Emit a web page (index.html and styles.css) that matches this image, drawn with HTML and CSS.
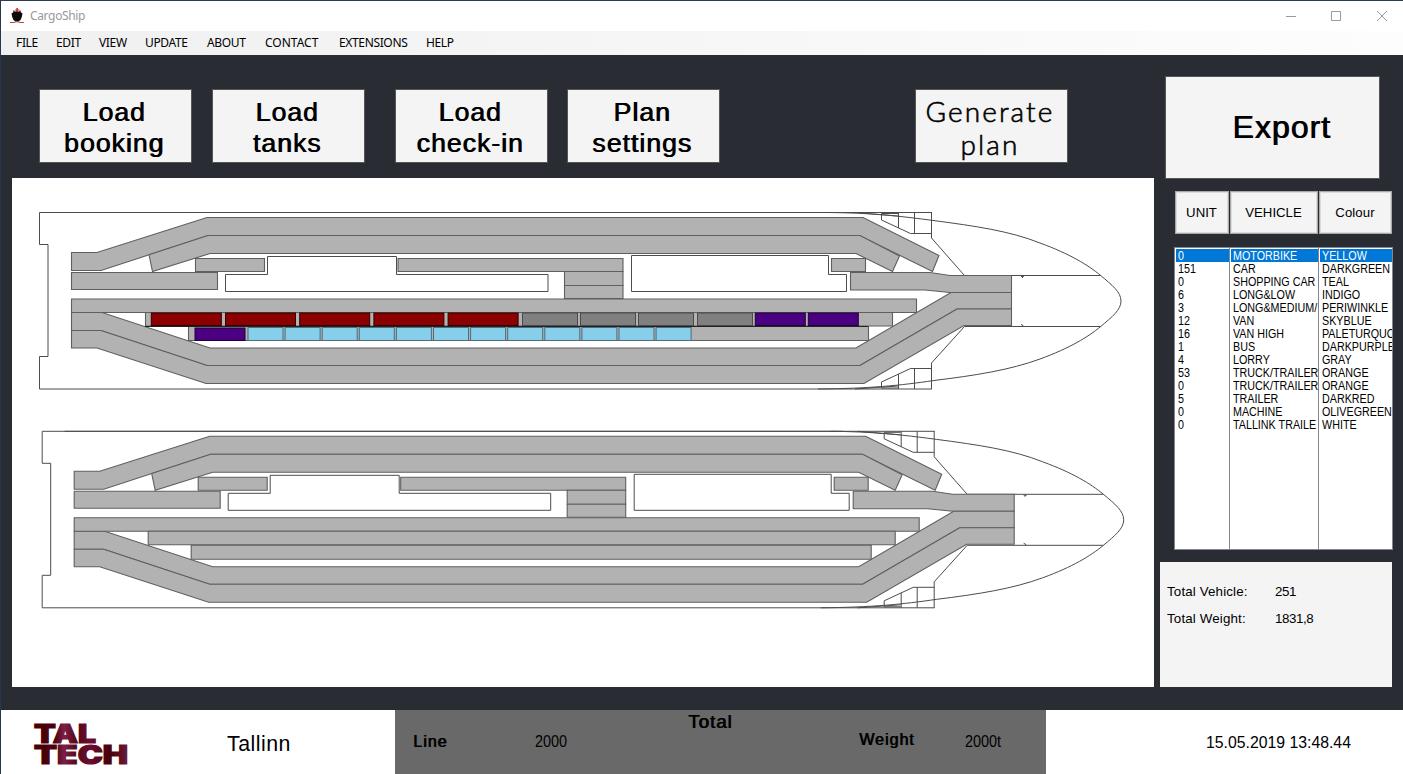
FILE: index.html
```html
<!DOCTYPE html>
<html lang="en">
<head>
<meta charset="utf-8">
<title>CargoShip</title>
<link rel="stylesheet" href="styles.css">
</head>
<body>
<div class="window">
  <header class="titlebar">
    <svg class="app-icon" width="16" height="16" viewBox="0 0 16 16">
      <path d="M4 4.500V2.500H6V1.500H7.300V0H9V1.500H10.300V2.500H12V4.500Z" fill="#c0423e"/>
      <path d="M6 3H7M9 3H10" stroke="#fff"/>
      <path d="M2.500 5.500L5 3.800H11L13.500 5.500L12.800 9L11.500 12L9.500 13.500H6.500L4.500 12L3.200 9Z" fill="#0b0b0b"/>
      <path d="M1 14.500H5L7 13.800H9L11 14.500H15" stroke="#b9403c" fill="none"/>
    </svg>
    <span class="app-name">CargoShip</span>
    <svg class="controls" width="104" height="14" viewBox="0 0 104 14">
      <g fill="none" stroke="#999">
        <path d="M1 7.500H11"/>
        <path d="M46.500 2.500H55.500V11.500H46.500Z"/>
        <path d="M92 2L102 12M102 2L92 12"/>
      </g>
    </svg>
  </header>
  <nav class="menu">
    <span class="m-file">FILE</span><span class="m-edit">EDIT</span><span class="m-view">VIEW</span><span class="m-update">UPDATE</span><span class="m-about">ABOUT</span><span class="m-contact">CONTACT</span><span class="m-ext">EXTENSIONS</span><span>HELP</span>
  </nav>
  <main class="body">
    <section class="left">
      <div class="actions">
        <button class="btn b1">Load<br>booking</button>
        <button class="btn b2">Load<br>tanks</button>
        <button class="btn b3">Load<br>check-in</button>
        <button class="btn b4">Plan<br>settings</button>
        <button class="btn generate">Generate<br>plan</button>
      </div>
      <div class="plan">
        <svg width="1142" height="509" viewBox="12 178 1142 509">
          <defs>
            <g id="deck">
              <g fill="none" stroke="#4c4c4c" stroke-width="1">
                <path d="M932 212.500H39.500V244.500H48V356.500H39.500V389H932"/>
                <path d="M62 212.500H840"/>
                <path d="M828 212.500C870 212.800 900 216 934 220.600C975 226 1010 231 1040 243C1070 254 1088 265 1100.700 275.500C1112 285 1121 292 1121 301C1121 310 1112 317 1100.700 326.500C1088 337 1070 348 1040 359C1010 370 975 375.500 934 380.500C900 385.500 870 388.500 818 389"/>
                <path d="M855 212.500L898 216M855 389L898 386M881.500 213.500H898M881.500 388H898"/>
                <path d="M881.500 213.500V220L910.500 233.500H931.500M931.500 212.500V238L964.500 275.500H1100.700"/>
                <path d="M881.500 388V382L910.500 368.500H931.500M931.500 389V363L964.500 326.500H1100.700"/>
                <path d="M898.500 212.500V228M914.500 212.500V233.500M898.500 374V389M914.500 368.500V389"/>
                <path d="M1021 276.500H1023.500L1022 278M1021 324.500L1023 325.500V327"/>
                <path d="M225.500 274.500H267.500V256.500H396.500V274.500H548V291.500H225.500Z"/>
                <path d="M631.500 255.500H828.500V274.500H846.500V291.500H631.500Z"/>
              </g>
              <g fill="#b2b2b2" stroke="#5f5f5f" stroke-width="1.100">
                <path d="M71.500 252.500H97L207 217.500H863L939 255.500L932.500 271.500L859.500 235.500H208L101 270.500H71.500Z"/>
                <path d="M149 254.700L208 235.500H860L899.500 256L892.500 271.500L856 253.500H210L152.500 271.500Z"/>
                <path d="M71.500 272.500H217.500V289.500H71.500Z"/>
                <path d="M195.500 258.500H264.500V271.500H195.500Z"/>
                <path d="M398 258.500H623V271.500H398Z"/>
                <path d="M564.500 271.500H623V285.500H564.500Z"/>
                <path d="M564.500 285.500H623V298.500H564.500Z"/>
                <path d="M831.500 258.500H865.500V271.500H831.500Z"/>
                <path d="M850.500 272.500H930L950 275.500H1011.500V292.500H950L925 290H850.500Z"/>
                <path d="M71.500 312.500H102L210 348H856L951 292.500H1011.500V309H957L860 365.500H207L101 330.500H71.500Z"/>
                <path d="M71.500 330.500H101L207 365.500H860L957 309H1011.500V325.500H964L864 383.500H206L97 348H71.500Z"/>
                <path d="M71.500 299H916.500V312.500H71.500Z"/>
                <path d="M145.500 312.500H892.500V326H145.500Z"/>
                <path d="M188.500 326.500H868.500V340.500H188.500Z"/>
              </g>
            </g>
            <rect id="red" y="313" width="70" height="12.500" fill="#8b0000" stroke="#300" stroke-width="1"/>
            <rect id="gray" y="313" width="55" height="12.500" fill="#808080" stroke="#4b4b4b" stroke-width="1"/>
            <rect id="indigo" width="50" height="12.500" fill="#4b0082" stroke="#200038" stroke-width="1"/>
            <rect id="sky" y="327.500" width="35" height="13" fill="#87ceeb" stroke="#4d6d7a" stroke-width="1"/>
          </defs>
          <use href="#deck"/>
          <use href="#red" x="151.300"/><use href="#red" x="225.500"/><use href="#red" x="299.700"/><use href="#red" x="373.900"/><use href="#red" x="448.100"/>
          <use href="#gray" x="522.500"/><use href="#gray" x="580.500"/><use href="#gray" x="638.500"/><use href="#gray" x="697.500"/>
          <use href="#indigo" x="755.300" y="313"/><use href="#indigo" x="808.300" y="313"/>
          <use href="#indigo" x="195" y="328"/>
          <use href="#sky" x="248"/><use href="#sky" x="285.100"/><use href="#sky" x="322.200"/><use href="#sky" x="359.300"/><use href="#sky" x="396.400"/><use href="#sky" x="433.500"/><use href="#sky" x="470.600"/><use href="#sky" x="507.700"/><use href="#sky" x="544.800"/><use href="#sky" x="581.900"/><use href="#sky" x="619"/><use href="#sky" x="656.100"/>
          <path d="M145 326.500H868" stroke="#222" fill="none"/>
          <use href="#deck" transform="translate(2.700 218.800)"/>
        </svg>
      </div>
    </section>
    <aside class="right">
      <button class="export">Export</button>
      <div class="heads"><span class="h1">UNIT</span><span class="h2">VEHICLE</span><span class="h3">Colour</span></div>
      <div class="lists">
        <ul class="c1"><li class="sel"><span>0</span></li><li><span>151</span></li><li><span>0</span></li><li><span>6</span></li><li><span>3</span></li><li><span>12</span></li><li><span>16</span></li><li><span>1</span></li><li><span>4</span></li><li><span>53</span></li><li><span>0</span></li><li><span>5</span></li><li><span>0</span></li><li><span>0</span></li></ul>
        <ul class="c2"><li class="sel"><span>MOTORBIKE</span></li><li><span>CAR</span></li><li><span>SHOPPING CAR</span></li><li><span>LONG&amp;LOW</span></li><li><span>LONG&amp;MEDIUM/</span></li><li><span>VAN</span></li><li><span>VAN HIGH</span></li><li><span>BUS</span></li><li><span>LORRY</span></li><li><span>TRUCK/TRAILER</span></li><li><span>TRUCK/TRAILER</span></li><li><span>TRAILER</span></li><li><span>MACHINE</span></li><li><span>TALLINK TRAILE</span></li></ul>
        <ul class="c3"><li class="sel"><span>YELLOW</span></li><li><span>DARKGREEN</span></li><li><span>TEAL</span></li><li><span>INDIGO</span></li><li><span>PERIWINKLE</span></li><li><span>SKYBLUE</span></li><li><span>PALETURQUO</span></li><li><span>DARKPURPLE</span></li><li><span>GRAY</span></li><li><span>ORANGE</span></li><li><span>ORANGE</span></li><li><span>DARKRED</span></li><li><span>OLIVEGREEN</span></li><li><span>WHITE</span></li></ul>
      </div>
      <dl class="totals">
        <dt>Total Vehicle:</dt><dd>251</dd>
        <dt>Total Weight:</dt><dd>1831,8</dd>
      </dl>
    </aside>
  </main>
  <footer class="footer">
    <svg class="logo" width="100" height="46" viewBox="0 0 100 46">
      <defs>
        <linearGradient id="wine" gradientUnits="userSpaceOnUse" x1="1" x2="95" y1="0" y2="0">
          <stop offset="0" stop-color="#480006"/><stop offset=".22" stop-color="#4c0010"/><stop offset=".32" stop-color="#7d1f48"/><stop offset=".45" stop-color="#560818"/><stop offset=".6" stop-color="#6b0c32"/><stop offset=".8" stop-color="#480006"/><stop offset="1" stop-color="#6e1a38"/>
        </linearGradient>
      </defs>
      <g class="logo-text" fill="url(#wine)" stroke="url(#wine)" stroke-width="1.200">
        <text x="1" y="20" textLength="62" lengthAdjust="spacingAndGlyphs">TAL</text>
        <text x="1" y="40.500" textLength="94" lengthAdjust="spacingAndGlyphs">TECH</text>
      </g>
    </svg>
    <span class="city">Tallinn</span>
    <div class="summary">
      <span class="bold line">Line</span>
      <span class="narrow v1">2000</span>
      <span class="bold total">Total</span>
      <span class="bold weight">Weight</span>
      <span class="narrow v2">2000t</span>
    </div>
    <time class="clock">15.05.2019 13:48.44</time>
  </footer>
</div>
</body>
</html>
```
FILE: styles.css
```css
* { box-sizing: border-box; }
body { margin: 0; font-family: "Liberation Sans", Arial, sans-serif; color: #000; }
.window {
  width: 1403px; height: 774px; overflow: hidden;
  display: flex; flex-direction: column;
  background: #2a2c34;
  border-top: 1px solid #2b3d55; border-left: 1px solid #26374f;
}
.titlebar { height: 30px; flex: none; display: flex; align-items: center; background: #fff; padding: 0 14px 0 8px; }
.app-name { margin-left: 5px; font: 12px/16px "Noto Sans", sans-serif; color: #999; letter-spacing: -.35px; }
.controls { margin-left: auto; }
.menu {
  height: 24px; flex: none; display: flex; padding-left: 15px;
  background: linear-gradient(90deg, #f0f0f0, #fdfdfd);
  font: 12px/23px "Noto Sans", sans-serif; letter-spacing: -.35px; white-space: nowrap;
}
.m-file { width: 40px; }
.m-edit { width: 43px; }
.m-view { width: 46px; }
.m-update { width: 62px; }
.m-about { width: 58px; }
.m-contact { width: 74px; letter-spacing: 0; }
.m-ext { width: 87px; }

.body { height: 655px; flex: none; display: flex; }
.left { width: 1153px; padding: 34px 0 0 11px; }
.actions { display: flex; height: 74px; padding-left: 27px; }
.btn, .export {
  margin: 0; padding: 0; background: #f4f4f4; border: 1px solid #555; color: #000; flex: none;
  font-family: "Liberation Sans", Arial, sans-serif; text-shadow: .8px 0 0 #000; letter-spacing: 1px;
}
.btn { width: 153px; height: 74px; font-size: 26.67px; line-height: 31px; padding: 4px 3px 0 0; }
.b2 { margin-left: 20px; }
.b3 { margin-left: 30px; }
.b4 { margin-left: 19px; }
.generate { margin-left: 195px; font-family: Lato, sans-serif; font-weight: 300; font-size: 28px; line-height: 33px; letter-spacing: 2.100px; text-shadow: none; -webkit-text-stroke: .6px #000; }
.plan { margin-top: 15px; width: 1142px; height: 509px; background: #fff; }
.plan svg { display: block; }

.right { width: 249px; padding: 21px 0 0 6px; }
.export { display: block; width: 215px; height: 103px; margin-left: 5px; font-size: 32px; padding-left: 18px; }
.heads { display: flex; gap: 1px; margin: 12px 0 0 15px; height: 43px; font-size: 13.200px; }
.heads span { background: #f4f4f4; border: 2px solid #dcdcdc; outline: 1px solid #a8a8a8; outline-offset: -1px; display: flex; align-items: center; justify-content: center; padding-right: 1px; }
.heads .h1 { width: 54px; }
.heads .h2 { width: 88px; }
.heads .h3 { width: 73px; letter-spacing: .1px; }
.lists { display: flex; margin: 13px 0 0 14px; width: 219px; height: 303px; border: 1px solid #82878f; background: #fff; }
.lists ul { list-style: none; margin: 0; padding: 1px 0 0; overflow: hidden; font-size: 12px; line-height: 15px; }
.lists .c1 { width: 55px; border-right: 1px solid #82878f; padding-left: 1px; }
.lists .c2 { width: 89px; border-right: 1px solid #82878f; padding-left: 1px; }
.lists .c3 { width: 73px; padding-left: 1px; }
.lists li { height: 13px; padding-left: 2px; white-space: nowrap; }
.lists span { display: inline-block; transform: scaleX(.895); transform-origin: left; }
.lists .sel { background: #0078d7; color: #fff; }
.totals {
  display: grid; grid-template-columns: 108px 1fr; grid-auto-rows: 27px; align-content: start;
  margin: 12px 0 0; width: 232px; height: 125px; padding: 16px 0 0 7px;
  background: #f4f4f4; font-size: 13.330px; line-height: 27px;
}
.totals dt { letter-spacing: .15px; }
.totals dd { margin: 0; letter-spacing: -.4px; }

.footer { height: 64px; flex: none; display: flex; background: #fff; }
.logo { margin: 13px 0 0 32px; }
.logo-text { font-family: Inter, sans-serif; font-weight: 900; font-size: 25.200px; }
.city { width: 168px; margin-left: 94px; font-size: 21.330px; line-height: 68px; letter-spacing: .5px; }
.summary { width: 651px; background: #696969; display: flex; align-items: flex-start; white-space: nowrap; }
.bold { text-shadow: .8px 0 0 #000; letter-spacing: 1px; font-size: 16px; line-height: 20px; }
.line { width: 122px; margin: 22px 0 0 18px; }
.narrow { font-size: 16px; line-height: 20px; transform: scaleX(.9); transform-origin: left; }
.v1 { width: 153px; margin-top: 22px; }
.bold.total { width: 171px; font-size: 18.670px; margin-top: 2px; }
.weight { width: 106px; margin-top: 20px; }
.v2 { margin-top: 22px; }
.clock { margin-left: 160px; font-size: 15.800px; line-height: 65px; white-space: nowrap; }
```
